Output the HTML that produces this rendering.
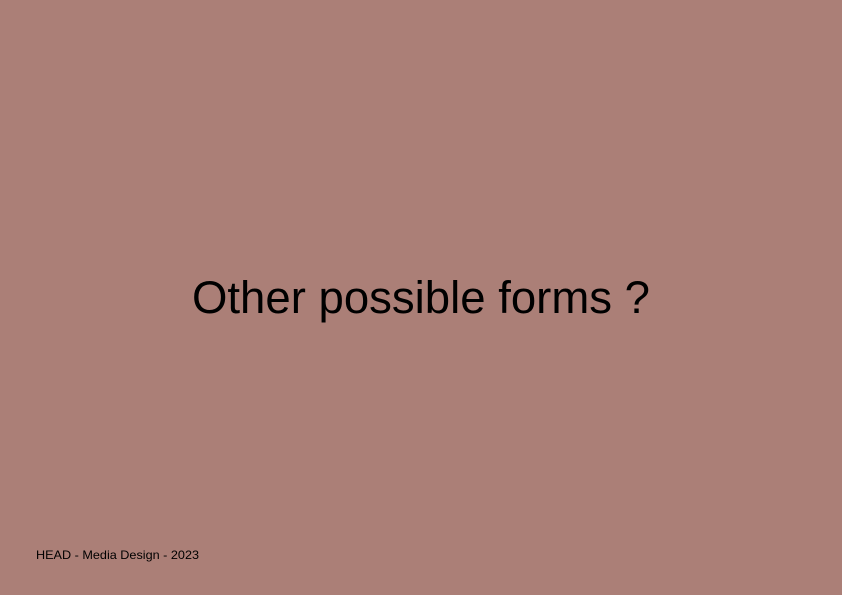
<!DOCTYPE html>
<html><head><style>
html,body{margin:0;padding:0;}
body{width:842px;height:595px;background:#ab7f77;overflow:hidden;position:relative;}
svg{position:absolute;left:0;top:0;}
</style></head><body>
<svg width="842" height="595" xmlns="http://www.w3.org/2000/svg">
<text x="192" y="313" font-family="Liberation Sans, sans-serif" font-size="45" fill="#000" textLength="458" lengthAdjust="spacingAndGlyphs">Other possible forms ?</text>
<text x="36" y="559" font-family="Liberation Sans, sans-serif" font-size="12" fill="#000" textLength="163" lengthAdjust="spacingAndGlyphs">HEAD - Media Design - 2023</text>
</svg>
</body></html>
